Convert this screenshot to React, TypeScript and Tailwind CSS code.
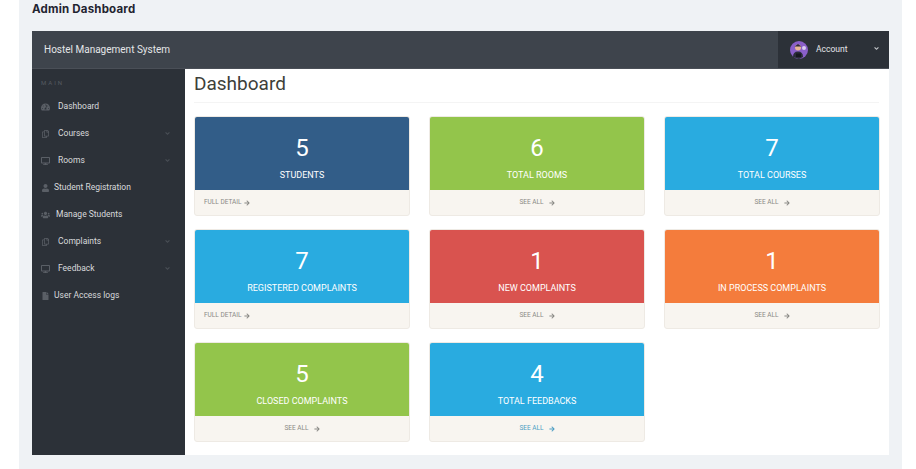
import { FaAngleDown, FaArrowRight, FaDesktop, FaFile, FaRegCopy, FaTachometerAlt, FaUser, FaUsers } from 'react-icons/fa';

const menu = [
  { label: 'Dashboard', icon: FaTachometerAlt, textClass: 'ml-[8px]', chevron: false },
  { label: 'Courses', icon: FaRegCopy, textClass: 'ml-[8px]', chevron: true },
  { label: 'Rooms', icon: FaDesktop, textClass: 'ml-[8px]', chevron: true },
  { label: 'Student Registration', icon: FaUser, textClass: 'ml-[4px]', chevron: false },
  { label: 'Manage Students', icon: FaUsers, textClass: 'ml-[6px]', chevron: false },
  { label: 'Complaints', icon: FaRegCopy, textClass: 'ml-[8px]', chevron: true },
  { label: 'Feedback', icon: FaDesktop, textClass: 'ml-[8px]', chevron: true },
  { label: 'User Access logs', icon: FaFile, textClass: 'ml-[4px]', chevron: false },
];

const cards = [
  { value: 5, label: 'STUDENTS', color: 'bg-[#325d88]', link: 'FULL DETAIL', left: true, linkColor: 'text-[#8a8a86]' },
  { value: 6, label: 'TOTAL ROOMS', color: 'bg-[#93c54b]', link: 'SEE ALL', left: false, linkColor: 'text-[#8a8a86]' },
  { value: 7, label: 'TOTAL COURSES', color: 'bg-[#29abe0]', link: 'SEE ALL', left: false, linkColor: 'text-[#8a8a86]' },
  { value: 7, label: 'REGISTERED COMPLAINTS', color: 'bg-[#29abe0]', link: 'FULL DETAIL', left: true, linkColor: 'text-[#8a8a86]' },
  { value: 1, label: 'NEW COMPLAINTS', color: 'bg-[#d9534f]', link: 'SEE ALL', left: false, linkColor: 'text-[#8a8a86]' },
  { value: 1, label: 'IN PROCESS COMPLAINTS', color: 'bg-[#f47c3c]', link: 'SEE ALL', left: false, linkColor: 'text-[#8a8a86]' },
  { value: 5, label: 'CLOSED COMPLAINTS', color: 'bg-[#93c54b]', link: 'SEE ALL', left: false, linkColor: 'text-[#8a8a86]' },
  { value: 4, label: 'TOTAL FEEDBACKS', color: 'bg-[#29abe0]', link: 'SEE ALL', left: false, linkColor: 'text-[#4f9fc4]' },
];

function Avatar() {
  return (
    <svg width="18" height="18" viewBox="0 0 18 18" className="shrink-0">
      <circle cx="9" cy="9" r="9" fill="#8a5fc9" />
      <circle cx="14" cy="7" r="2" fill="#d9cdf0" />
      <circle cx="8" cy="6.5" r="3" fill="#e8b796" />
      <path d="M4.5 5.5 L8 3 L11.5 5.5 Z" fill="#2e2a3a" />
      <path d="M3 16 Q3 10.5 8 10.5 Q13 10.5 13 16 L9 18 Z" fill="#2b2d3a" />
      <rect x="6" y="12.5" width="5" height="3.5" fill="#17181f" />
    </svg>
  );
}

export default function App() {
  return (
    <div className="h-[469px] w-[916px] overflow-hidden bg-white font-['Roboto',sans-serif]">
      <div className="ml-[19px] flex h-full w-[883px] flex-col bg-[#eff2f5] px-[13px]">
        <h1 className="flex h-[31px] items-start pt-[1px] font-['Inter',sans-serif] text-[11.5px] leading-[17px] font-bold tracking-[0.2px] text-[#1f2430]">
          Admin Dashboard
        </h1>

        <div className="flex h-[424px] w-[857px] flex-col bg-white">
          <header className="flex h-[38px] shrink-0 items-center justify-between border-b border-[#4a4f57] bg-[#3e444c]">
            <span className="pl-[12px] text-[10px] text-[#e4e6e8]">Hostel Management System</span>
            <div className="flex h-full w-[111px] items-center bg-[#2c3138] pl-[12px]">
              <Avatar />
              <span className="ml-[8px] text-[8.5px] text-[#e4e6e8]">Account</span>
              <FaAngleDown className="ml-[26px] mb-[3px] text-[7px] text-[#c4c7cb]" />
            </div>
          </header>

          <div className="flex min-h-0 flex-1">
            <aside className="w-[153px] shrink-0 bg-[#2c3138] pt-[10px] pl-[9px]">
              <div className="mb-[7px] text-[6px] leading-[7px] tracking-[2px] text-[#565b62]">MAIN</div>
              {menu.map((item) => (
                <div key={item.label} className="flex h-[27px] items-center pr-[14px]">
                  <item.icon className="w-[9px] shrink-0 text-[8px] text-[#5a5f66]" />
                  <span className={`${item.textClass} text-[8.5px] text-[#d8dadc]`}>{item.label}</span>
                  {item.chevron && <FaAngleDown className="ml-auto text-[7px] text-[#4a4f56]" />}
                </div>
              ))}
            </aside>

            <main className="min-w-0 flex-1 pt-[4px] pr-[10px] pl-[9px]">
              <h2 className="h-[30px] border-b border-[#f4f4f4] text-[19px] leading-[22px] text-[#3e3f3a]">Dashboard</h2>
              <div className="mt-[13px] grid grid-cols-[216px_216px_216px] gap-x-[19px] gap-y-[13px]">
                {cards.map((card) => (
                  <div key={card.label} className="h-[100px] overflow-hidden rounded-[3px] border border-[#eeeae4] bg-[#f8f5f0]">
                    <div className={`-mx-px -mt-px flex h-[74px] flex-col items-center pt-[17px] text-white ${card.color}`}>
                      <div className="text-[24px] leading-[30px]">{card.value}</div>
                      <div className="mt-[7px] text-[9px] leading-[11px]">{card.label}</div>
                    </div>
                    <div
                      className={`flex h-[25px] items-center text-[6.5px] ${card.linkColor} ${card.left ? 'pl-[9px]' : 'justify-center'}`}
                    >
                      <span>{card.link}</span>
                      <FaArrowRight className={`${card.left ? 'ml-[2px]' : 'ml-[5px]'} text-[6px]`} />
                    </div>
                  </div>
                ))}
              </div>
            </main>
          </div>
        </div>
      </div>
    </div>
  );
}
